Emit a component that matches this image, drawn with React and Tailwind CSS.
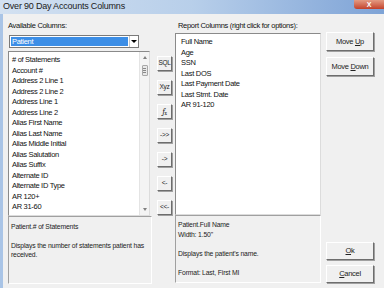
// App.jsx
const FONT = { fontFamily: '"Liberation Sans", Arial, sans-serif' };

const available = [
  "# of Statements",
  "Account #",
  "Address 2 Line 1",
  "Address 2 Line 2",
  "Address Line 1",
  "Address Line 2",
  "Alias First Name",
  "Alias Last Name",
  "Alias Middle Initial",
  "Alias Salutation",
  "Alias Suffix",
  "Alternate ID",
  "Alternate ID Type",
  "AR 120+",
  "AR 31-60",
  "AR 61-90",
];

const report = ["Full Name", "Age", "SSN", "Last DOS", "Last Payment Date", "Last Stmt. Date", "AR 91-120"];

function Btn({ children, className = "" }) {
  return (
    <div
      className={`flex items-center justify-center whitespace-nowrap bg-[#f0f0f0] border border-t-white border-l-white border-r-[#6d6d6d] border-b-[#6d6d6d] shadow-[1px_1px_0_#a0a0a0] text-[#222] ${className}`}
    >
      {children}
    </div>
  );
}

function SmallBtn({ children }) {
  return <Btn className="w-[15px] h-[15px] text-[6.5px] tracking-[-0.3px] leading-none">{children}</Btn>;
}

export default function App() {
  return (
    <div className="w-[384px] h-[288px] flex flex-col bg-[#a9c4e6] overflow-hidden" style={FONT}>
      {/* Title bar */}
      <div className="h-[14px] flex items-start justify-between bg-gradient-to-r from-[#d3e1f1] via-[#b8cfea] to-[#7ea3d6]">
        <span className="pl-[3px] text-[9px] tracking-[-0.2px] leading-[13px] text-[#1a1a1a]">
          Over 90 Day Accounts Columns
        </span>
        <div className="w-[30px] h-[9px] bg-gradient-to-b from-[#e39a82] to-[#c2402a] rounded-bl-[3px] flex items-center justify-center text-white text-[7px] font-bold leading-none">
          X
        </div>
      </div>

      {/* Body */}
      <div className="flex-1 ml-[3px] bg-[#f0f0f0] flex pt-[6px] pl-[5px] text-[#111] text-[7.5px] tracking-[-0.3px]">
        {/* Left column */}
        <div className="w-[144px] flex flex-col">
          <div className="h-[15px] leading-[12px]">Available Columns:</div>
          <div className="w-[130px] h-[13px] ml-[1px] flex border border-[#7a7a7a] bg-white">
            <div className="flex-1 m-[1px] bg-[#3c8ee6] text-white leading-[9px] pl-[1px]">Patient</div>
            <div className="w-[9px] flex items-center justify-center border-l border-[#c8c8c8]">
              <div className="w-0 h-0 border-l-[3px] border-r-[3px] border-t-[3px] border-l-transparent border-r-transparent border-t-black" />
            </div>
          </div>
          <div className="h-[3px]" />
          <div className="w-[142px] h-[165px] flex bg-white border border-t-[#8a8a8a] border-l-[#8a8a8a] border-r-[#dcdcdc] border-b-[#dcdcdc] overflow-hidden">
            <div className="flex-1 pl-[3px] pt-[3px] leading-[10.5px] overflow-hidden">
              {available.map((a) => (
                <div key={a} className="whitespace-nowrap">{a}</div>
              ))}
            </div>
            <div className="w-[10px] flex flex-col items-center bg-[#f4f4f4] border-l border-[#e4e4e4]">
              <div className="mt-[4px] w-0 h-0 border-l-[2px] border-r-[2px] border-b-[3px] border-l-transparent border-r-transparent border-b-[#808080]" />
              <div className="mt-[6px] w-[6px] h-[11px] bg-[#e8e8e8] border border-[#a8a8a8] rounded-[1px] flex flex-col items-center justify-center gap-[1px]">
                <div className="w-[3px] h-px bg-[#888]" />
                <div className="w-[3px] h-px bg-[#888]" />
                <div className="w-[3px] h-px bg-[#888]" />
              </div>
              <div className="flex-1" />
              <div className="mb-[4px] w-0 h-0 border-l-[2px] border-r-[2px] border-t-[3px] border-l-transparent border-r-transparent border-t-[#808080]" />
            </div>
          </div>
          <div className="w-[144px] h-[68px] border border-t-[#a0a0a0] border-l-[#a0a0a0] border-r-white border-b-white pl-[2px] pt-[5px] text-[6.8px] tracking-[-0.15px] leading-[9.5px] text-[#222] whitespace-nowrap">
            <div>Patient.# of Statements</div>
            <div className="h-[9px]" />
            <div>Displays the number of statements patient has</div>
            <div>received.</div>
          </div>
        </div>

        {/* Middle buttons */}
        <div className="w-[20px] pl-[5px] flex flex-col gap-[9px] pt-[36px]">
          <SmallBtn>SQL</SmallBtn>
          <SmallBtn>Xyz</SmallBtn>
          <SmallBtn>
            <span className="italic font-serif text-[8px]">f<sub className="text-[5px] not-italic">x</sub></span>
          </SmallBtn>
          <SmallBtn>-&gt;&gt;</SmallBtn>
          <SmallBtn>-&gt;</SmallBtn>
          <SmallBtn>&lt;-</SmallBtn>
          <SmallBtn>&lt;&lt;-</SmallBtn>
        </div>

        {/* Right column */}
        <div className="w-[146px] ml-[3px] flex flex-col">
          <div className="h-[13px] pl-[3px] leading-[11px] whitespace-nowrap">Report Columns (right click for options):</div>
          <div className="h-[182px] bg-white border border-t-[#8a8a8a] border-l-[#8a8a8a] border-r-[#dcdcdc] border-b-[#dcdcdc] pl-[5px] pt-[3px] leading-[10.5px] overflow-hidden">
            {report.map((r) => (
              <div key={r} className="whitespace-nowrap">{r}</div>
            ))}
          </div>
          <div className="h-[68px] border border-t-[#a0a0a0] border-l-[#a0a0a0] border-r-white border-b-white pl-[2px] pt-[4px] text-[6.8px] tracking-[-0.15px] leading-[9.5px] text-[#222] whitespace-nowrap">
            <div>Patient.Full Name</div>
            <div>Width: 1.50"</div>
            <div className="h-[9.5px]" />
            <div>Displays the patient's name.</div>
            <div className="h-[9.5px]" />
            <div>Format: Last, First MI</div>
          </div>
        </div>

        {/* Right buttons */}
        <div className="w-[48px] ml-[5px] flex flex-col pt-[12px] pb-[5px]">
          <Btn className="h-[19px]">
            <span>Move <span className="underline">U</span>p</span>
          </Btn>
          <Btn className="h-[19px] mt-[6px]">
            <span>Move <span className="underline">D</span>own</span>
          </Btn>
          <div className="flex-1" />
          <Btn className="h-[18px]">
            <span><span className="underline">O</span>k</span>
          </Btn>
          <Btn className="h-[18px] mt-[5px]">
            <span><span className="underline">C</span>ancel</span>
          </Btn>
        </div>
      </div>
    </div>
  );
}
